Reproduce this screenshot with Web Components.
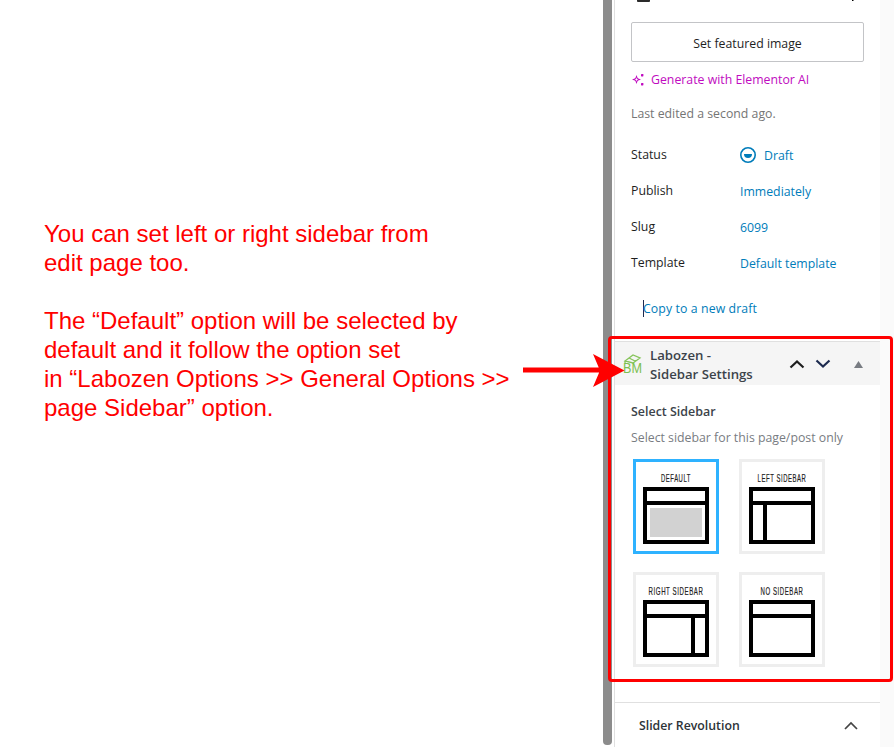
<!DOCTYPE html>
<html lang="en">
  <head>
    <meta charset="UTF-8" />
    <title>Labozen sidebar settings</title>
    <style>
      html, body { margin: 0; background: #fff; }
      body { width: 894px; height: 747px; overflow: hidden; font-family: "Open Sans", "Noto Sans", sans-serif; }
    </style>
    <script>
      // small helper, every element below is the same shape: styles + markup in an open shadow root
      function define(name, html, setup) {
        const tpl = document.createElement("template");
        tpl.innerHTML = html;
        customElements.define(name, class extends HTMLElement {
          constructor() {
            super();
            this.attachShadow({ mode: "open" });
            this.shadowRoot.appendChild(tpl.content.cloneNode(true));
          }
          connectedCallback() {
            if (setup) setup(this, this.shadowRoot);
          }
        });
      }

      define("page-stage", `
        <style>
          :host { display: flex; position: relative; width: 894px; height: 747px; overflow: hidden; }
          .left { width: 603px; flex: none; }
          .thumb { width: 9px; height: 745px; flex: none; background: #8c8c8c; border-radius: 0 0 4px 4px; }
          .right { flex: 1; margin-left: 2px; min-width: 0; }
          .box { position: absolute; left: 608px; top: 336px; width: 279px; height: 340px; border: 3px solid #f00; border-radius: 4px; }
          svg { position: absolute; left: 520px; top: 350px; }
        </style>
        <div class="left"><slot name="note"></slot></div>
        <div class="thumb"></div>
        <div class="right"><slot></slot></div>
        <div class="box"></div>
        <svg width="106" height="40" viewBox="520 350 106 40"><path fill="#f00" d="M523 367.5H600V372.5H523ZM593 354L624.5 370.5L593 387L600 370.5Z"/></svg>
      `);

      define("note-text", `
        <style>
          :host { display: block; padding: 219px 0 0 44px; font: 24px/29px "Liberation Sans", Arial, sans-serif; color: #f00; }
          p { margin: 0 0 29px; }
        </style>
        <p>You can set left or right sidebar from<br>edit page too.</p>
        <p>The “Default” option will be selected by<br>default and it follow the option set<br>in “Labozen Options &gt;&gt; General Options &gt;&gt;<br>page Sidebar” option.</p>
      `);

      define("editor-sidebar", `
        <style>
          :host { display: block; height: 747px; border-left: 1px solid #e0e0e0; background: linear-gradient(90deg, #fff 265px, #fafafa 265px); overflow: hidden; font-size: 12.3px; color: #1e1e1e; }
        </style>
        <slot></slot>
      `);

      define("featured-section", `
        <style>
          :host { display: block; padding: 0 30px 0 16px; width: 233px; }
          .cut { display: block; margin-bottom: 20px; }
          button { display: block; box-sizing: border-box; width: 233px; height: 40px; padding: 2px 0 0; background: #fff; border: 1px solid #c3c4c7; border-radius: 2px; font: inherit; color: #1e1e1e; }
          .ai { display: flex; align-items: center; gap: 6px; height: 18px; margin: 8px 0 0 1px; color: #c00bc0; }
          .last { margin-top: 17px; height: 18px; line-height: 18px; color: #757575; }
        </style>
        <svg class="cut" width="233" height="2" viewBox="0 0 233 2"><path fill="#2b2b2b" d="M6 0H19V1.2Q19 2 18 2H7Q6 2 6 1.2Z"/><rect x="221" width="1.5" height="1"/></svg>
        <button>Set featured image</button>
        <div class="ai">
          <svg width="13" height="13" viewBox="0 0 13 13" fill="#c00bc0"><path d="M4.5 2L5.7 5.3L9 6.5L5.7 7.7L4.5 11L3.3 7.7L0 6.5L3.3 5.3ZM4.5 4.6L4 6L2.6 6.5L4 7L4.5 8.4L5 7L6.4 6.5L5 6Z"/><rect x="9" y="1" width="2.4" height="2.4" rx=".6"/><rect x="9" y="10" width="2.4" height="2.4" rx=".6"/></svg>
          <span>Generate with Elementor AI</span>
        </div>
        <div class="last">Last edited a second ago.</div>
      `);

      define("meta-row", `
        <style>
          :host { display: grid; grid-template-columns: 109px 1fr; height: 36px; align-items: center; padding-left: 16px; }
          .v { display: flex; align-items: center; gap: 7px; color: #007cba; margin-top: 2px; }
        </style>
        <div><slot name="label"></slot></div>
        <div class="v"><slot></slot></div>
      `);

      define("sidebar-choice", `
        <style>
          :host { display: block; width: 86px; height: 95px; }
          svg { display: block; }
          text { font-family: "Liberation Sans", Arial, sans-serif; font-size: 10.5px; letter-spacing: 1px; fill: #222; stroke: #222; stroke-width: .2px; }
        </style>
        <svg width="86" height="95" viewBox="0 0 86 95"></svg>
      `, (el, root) => {
        const on = el.hasAttribute("selected");
        const kind = el.getAttribute("kind");
        const label = el.getAttribute("label");
        const width = el.getAttribute("w");
        let lines = "";
        if (kind === "left") lines = '<rect x="24" y="46" width="4" height="37"/>';
        if (kind === "right") lines = '<rect x="58" y="46" width="4" height="37"/>';
        let fill = kind === "default" ? '<rect x="17" y="49" width="52" height="29" fill="#d2d2d2"/>' : "";
        const svg = root.querySelector("svg");
        svg.innerHTML = `
          <rect x="1.5" y="1.5" width="83" height="92" fill="#fff" stroke="${on ? "#2eb2ff" : "#eee"}" stroke-width="3"/>
          <text text-anchor="middle">${label}</text>
          <path fill-rule="evenodd" d="M10 28H76V85H10ZM14 32V42H72V32ZM14 46V81H72V46Z"/>
          ${lines}${fill}`;
        // the labels are a condensed face in the original, squeeze to the measured width
        const text = svg.querySelector("text");
        const sx = width / text.getComputedTextLength();
        text.setAttribute("transform", `translate(43 23) scale(${sx} 1)`);
      });

      define("labozen-panel", `
        <style>
          :host { display: block; width: 265px; font-size: 13.2px; }
          header { display: flex; align-items: center; height: 44px; background: #f5f5f5; border-top: 1px solid #e0e0e0; box-sizing: border-box; padding: 1px 0 0 6px; font-weight: 600; color: #3c434a; line-height: 19px; }
          .logo { flex: none; margin-right: 7px; }
          .title { width: 138px; margin-top: 2px; }
          .btns { display: flex; align-items: center; }
          .body { padding: 18px 0 0 16px; font-size: 12.3px; }
          h3 { margin: 0; height: 18px; line-height: 18px; font: inherit; font-size: 12.45px; font-weight: 600; color: #3c434a; }
          p { margin: 8px 0 12px; height: 18px; line-height: 18px; color: #787c82; }
          .grid { display: grid; grid-template-columns: 86px 86px; column-gap: 20px; row-gap: 18px; margin-left: 2px; }
          text { font-family: "Liberation Sans", Arial, sans-serif; font-size: 14px; font-weight: 400; fill: #7cc04f; }
        </style>
        <header>
          <svg class="logo" width="22" height="22" viewBox="0 0 22 22" fill="none" stroke="#86c45a" stroke-width="1.3">
            <path d="M4 8L12 2L19 5L12 10ZM4 8V10M12 10V11M8 5L15 8.5"/>
            <text x="2" y="20" stroke="none" textLength="19" lengthAdjust="spacingAndGlyphs">BM</text>
          </svg>
          <div class="title">Labozen -<br>Sidebar Settings</div>
          <div class="btns">
            <svg width="18" height="18" viewBox="0 0 18 18" fill="none" stroke="#1e1e1e" stroke-width="2.2"><path d="M2.5 12.5L9 6.5L15.5 12.5"/></svg>
            <svg style="margin-left:8px" width="18" height="18" viewBox="0 0 18 18" fill="none" stroke="#1d2b4f" stroke-width="2.2"><path d="M2.5 5.5L9 11.5L15.5 5.5"/></svg>
            <svg style="margin-left:22px" width="9" height="7" viewBox="0 0 9 7" fill="#787c82"><path d="M4.5 0L9 7H0Z"/></svg>
          </div>
        </header>
        <div class="body">
          <h3>Select Sidebar</h3>
          <p>Select sidebar for this page/post only</p>
          <div class="grid"><slot></slot></div>
        </div>
      `);

      define("slider-section", `
        <style>
          :host { display: flex; align-items: center; justify-content: space-between; height: 46px; width: 265px; box-sizing: border-box; margin-top: 35px; padding: 0 20px 0 24px; border-top: 1px solid #e0e0e0; font-weight: 600; color: #2c3338; }
        </style>
        <span><slot></slot></span>
        <svg width="18" height="18" viewBox="0 0 18 18" fill="none" stroke="#444" stroke-width="1.7"><path d="M3 12L9 6L15 12"/></svg>
      `);

      define("copy-draft", `
        <style>
          :host { display: block; height: 34px; margin: 12px 0 15px; padding-left: 28px; line-height: 34px; color: #007cba; letter-spacing: .1px; }
          span { box-shadow: inset 1px 0 #1d2b4f; }
        </style>
        <span><slot></slot></span>
      `);
    </script>
  </head>
  <body>
    <page-stage>
      <note-text slot="note"></note-text>
      <editor-sidebar>
        <featured-section></featured-section>
        <div style="height:13px"></div>
        <meta-row><span slot="label">Status</span>
          <svg style="margin-left:-1px" width="18" height="18" viewBox="0 0 18 18"><circle cx="9" cy="9" r="7.2" fill="none" stroke="#007cba" stroke-width="1.6"/><path fill="#007cba" d="M5 8H13A4 4 0 0 1 5 8Z"/></svg>
          <span>Draft</span></meta-row>
        <meta-row><span slot="label">Publish</span>Immediately</meta-row>
        <meta-row><span slot="label">Slug</span>6099</meta-row>
        <meta-row><span slot="label">Template</span>Default template</meta-row>
        <copy-draft>Copy to a new draft</copy-draft>
        <labozen-panel>
          <sidebar-choice kind="default" label="DEFAULT" w="30" selected></sidebar-choice>
          <sidebar-choice kind="left" label="LEFT SIDEBAR" w="49"></sidebar-choice>
          <sidebar-choice kind="right" label="RIGHT SIDEBAR" w="55"></sidebar-choice>
          <sidebar-choice kind="none" label="NO SIDEBAR" w="43"></sidebar-choice>
        </labozen-panel>
        <slider-section>Slider Revolution</slider-section>
      </editor-sidebar>
    </page-stage>
  </body>
</html>
